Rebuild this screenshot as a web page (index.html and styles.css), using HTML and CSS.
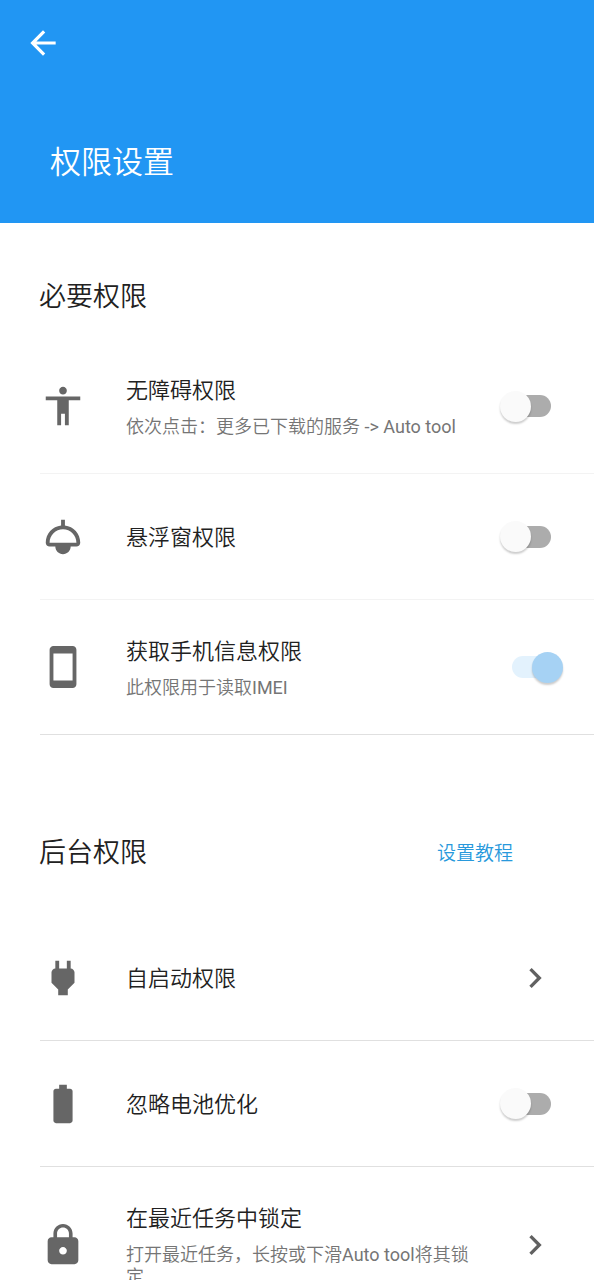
FILE: index.html
```html
<!DOCTYPE html>
<html lang="zh-CN">
<head>
<meta charset="utf-8">
<meta name="viewport" content="width=device-width, initial-scale=1">
<title>权限设置</title>
<link rel="stylesheet" href="styles.css">
</head>
<body>
<div class="page">
  <header class="app-bar">
    <button class="back" type="button" aria-label="返回">
      <svg viewBox="0 0 24 24" aria-hidden="true"><path d="M20 11H7.83l5.59-5.59L12 4l-8 8 8 8 1.41-1.41L7.83 13H20v-2z"/></svg>
    </button>
    <h1 class="app-title">权限设置</h1>
  </header>
  <main>
    <section class="group">
      <div class="group-head">
        <h2 class="group-title">必要权限</h2>
      </div>
      <label class="row row-soft">
        <svg class="row-icon" viewBox="0 0 24 24" aria-hidden="true"><path d="M12 2c1.1 0 2 .9 2 2s-.9 2-2 2-2-.9-2-2 .9-2 2-2zm9 7h-6v13h-2v-6h-2v6H9V9H3V7h18v2z"/></svg>
        <span class="row-text">
          <span class="row-title">无障碍权限</span>
          <span class="row-note">依次点击：更多已下载的服务 -&gt; Auto tool</span>
        </span>
        <input class="switch" type="checkbox" role="switch">
      </label>
      <label class="row row-soft">
        <svg class="row-icon" viewBox="0 0 24 24" aria-hidden="true"><path d="M13 6.06V3h-2v3.06c-4.5.5-8 4.31-8 8.93C3 16.1 3.9 17 5.01 17H8c0 2.21 1.79 4 4 4s4-1.79 4-4h2.99C20.1 17 21 16.1 21 14.99c0-4.62-3.5-8.43-8-8.93zM12 15H5c0-3.86 3.14-7 7-7s7 3.14 7 7h-7z"/></svg>
        <span class="row-text">
          <span class="row-title">悬浮窗权限</span>
        </span>
        <input class="switch" type="checkbox" role="switch">
      </label>
      <label class="row">
        <svg class="row-icon" viewBox="0 0 24 24" aria-hidden="true"><path d="M17 1.01L7 1c-1.1 0-1.99.9-1.99 2v18c0 1.1.89 2 1.99 2h10c1.1 0 2-.9 2-2V3c0-1.1-.9-1.99-2-1.99zM17 19H7V5h10v14z"/></svg>
        <span class="row-text">
          <span class="row-title">获取手机信息权限</span>
          <span class="row-note">此权限用于读取IMEI</span>
        </span>
        <input class="switch" type="checkbox" role="switch" checked disabled>
      </label>
    </section>
    <section class="group">
      <div class="group-head">
        <h2 class="group-title">后台权限</h2>
        <button class="guide" type="button">设置教程</button>
      </div>
      <button class="row" type="button">
        <svg class="row-icon" viewBox="0 0 24 24" aria-hidden="true"><path d="M16.01 7L16 3h-2v4h-4V3H8v4h-.01C7 6.99 6 7.99 6 8.99v5.49L9.5 18v3h5v-3l3.5-3.51v-5.5c0-1-1-2-1.99-1.99z"/></svg>
        <span class="row-text">
          <span class="row-title">自启动权限</span>
        </span>
        <svg class="chevron" viewBox="0 0 24 24" aria-hidden="true"><path d="M10 6L8.59 7.41 13.17 12l-4.58 4.59L10 18l6-6z"/></svg>
      </button>
      <label class="row">
        <svg class="row-icon" viewBox="0 0 24 24" aria-hidden="true"><path d="M15.67 4H14V2h-4v2H8.33C7.6 4 7 4.6 7 5.33v15.33C7 21.4 7.6 22 8.33 22h7.33c.74 0 1.34-.6 1.34-1.33V5.33C17 4.6 16.4 4 15.67 4z"/></svg>
        <span class="row-text">
          <span class="row-title">忽略电池优化</span>
        </span>
        <input class="switch" type="checkbox" role="switch">
      </label>
      <button class="row" type="button">
        <svg class="row-icon" viewBox="0 0 24 24" aria-hidden="true"><path d="M18 8h-1V6c0-2.76-2.24-5-5-5S7 3.24 7 6v2H6c-1.1 0-2 .9-2 2v10c0 1.1.9 2 2 2h12c1.1 0 2-.9 2-2V10c0-1.1-.9-2-2-2zm-6 9c-1.1 0-2-.9-2-2s.9-2 2-2 2 .9 2 2-.9 2-2 2zm3.1-9H8.9V6c0-1.71 1.39-3.1 3.1-3.1 1.71 0 3.1 1.39 3.1 3.1v2z"/></svg>
        <span class="row-text">
          <span class="row-title">在最近任务中锁定</span>
          <span class="row-note">打开最近任务，长按或下滑Auto tool将其锁定</span>
        </span>
        <svg class="chevron" viewBox="0 0 24 24" aria-hidden="true"><path d="M10 6L8.59 7.41 13.17 12l-4.58 4.59L10 18l6-6z"/></svg>
      </button>
    </section>
  </main>
</div>
</body>
</html>
```
FILE: styles.css
```css
* {
  box-sizing: border-box;
}

body {
  margin: 0;
  background: #fff;
  color: #212121;
  font-family: Roboto, "Noto Sans CJK SC DemiLight", "Noto Sans CJK SC", sans-serif;
  font-weight: 350;
}

button {
  padding: 0;
  border: 0;
  background: none;
  color: inherit;
  font: inherit;
  cursor: pointer;
}

.page {
  height: 100vh;
  overflow-y: auto;
  scrollbar-width: none;
}

/* App bar */
.app-bar {
  display: flex;
  flex-direction: column;
  align-items: flex-start;
  gap: 78px;
  padding: 24px 24px 37px;
  background: #2196f3;
  color: #fff;
}

.back {
  display: flex;
}

.back svg {
  width: 38px;
  height: 38px;
  fill: currentColor;
}

.app-title {
  margin: 0;
  padding-left: 26px;
  font-size: 31px;
  font-weight: 350;
  line-height: 46px;
}

/* Groups */
.group-head {
  display: flex;
  align-items: center;
  justify-content: space-between;
  padding: 54px 81px 22px 39px;
}

.group + .group {
  margin-top: 24px;
}

.group-title {
  margin: 0;
  font-size: 27px;
  font-weight: 350;
  line-height: 40px;
}

.guide {
  height: 80px;
  padding-bottom: 4px;
  color: #2899dc;
  font-size: 19px;
}

/* Rows */
.row {
  display: flex;
  align-items: center;
  width: calc(100% - 40px);
  min-height: 126px;
  margin-left: 40px;
  padding: 34px 31px 34px 0;
  border-bottom: 1px solid #e0e0e0;
  text-align: left;
  cursor: pointer;
}

.row-soft {
  border-bottom-color: #f3f3f3;
}

.row-icon {
  flex: none;
  width: 46px;
  height: 46px;
  margin-right: 40px;
  fill: #666;
}

.row-text {
  display: flex;
  flex: 1;
  flex-direction: column;
  gap: 11px;
  min-width: 0;
  padding: 4px 32px 1px 0;
}

.row-title {
  font-size: 22px;
  line-height: 28px;
}

.row-note {
  color: #757575;
  font-size: 18px;
  font-weight: 400;
  line-height: 22px;
}

.chevron {
  flex: none;
  width: 40px;
  height: 40px;
  margin-right: 8px;
  fill: #616161;
}

/* Switch */
.switch {
  display: grid;
  flex: none;
  align-items: center;
  width: 63px;
  height: 31px;
  margin: 0;
  appearance: none;
  cursor: pointer;
}

.switch::before,
.switch::after {
  grid-area: 1 / 1;
  content: "";
}

.switch::before {
  justify-self: center;
  width: 39px;
  height: 22px;
  border-radius: 11px;
  background: #acacac;
}

.switch::after {
  justify-self: start;
  width: 31px;
  height: 31px;
  border-radius: 50%;
  background: #fafafa;
  box-shadow: 0 2px 2px rgba(0, 0, 0, 0.2);
}

.switch:checked::before {
  background: #e3f2fd;
}

.switch:checked::after {
  justify-self: end;
  background: #a6d2f4;
}
```
